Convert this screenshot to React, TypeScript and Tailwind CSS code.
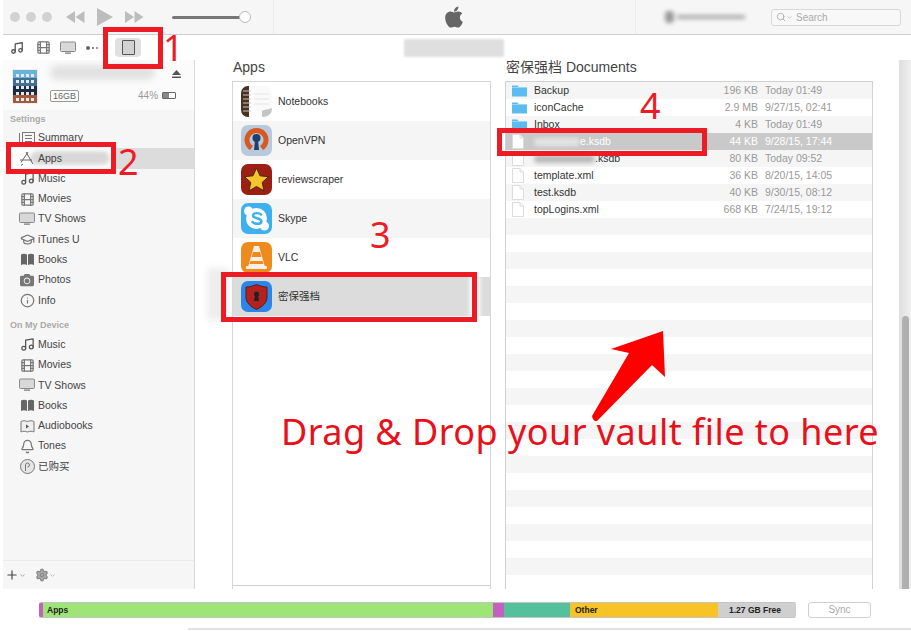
import { Music, Film, Bell, Plus, Settings, Search, ChevronDown, GraduationCap, Info } from 'lucide-react';
import { FaApple, FaCamera } from 'react-icons/fa';
import { ReactNode } from 'react';

const TvIcon = () => (
  <svg width="16" height="14" viewBox="0 0 16 14">
    <rect x="0.5" y="1" width="15" height="9.5" rx="1" fill="#d8d8d8" stroke="#8a8a8a" />
    <rect x="5" y="11.5" width="6" height="1.2" fill="#777" />
  </svg>
);

const BooksIcon = () => (
  <svg width="15" height="13" viewBox="0 0 15 13">
    <path d="M1 1.500c2-1 4-1 6 0V12c-2-1-4-1-6 0zM8 1.500c2-1 4-1 6 0V12c-2-1-4-1-6 0z" fill="#666" />
  </svg>
);

const ListIcon = () => (
  <svg width="16" height="13" viewBox="0 0 16 13" fill="none" stroke="#777">
    <rect x="3.500" y="0.500" width="12" height="12" />
    <path d="M0.500 1v11M6 3.500h7M6 6.500h7M6 9.500h7" />
  </svg>
);

const AppStoreIcon = () => (
  <svg width="16" height="15" viewBox="0 0 16 15" fill="none" stroke="#666">
    <path d="M2 11.500 9 1M7 1l7 12M1 9h12M4 13l-2 1.500" />
  </svg>
);

const AudiobookIcon = () => (
  <svg width="15" height="13" viewBox="0 0 15 13" fill="none" stroke="#777">
    <path d="M1 1.500c2-1 4-1 6.500 0 2.500-1 4.500-1 6.500 0V12c-2-1-4-1-6.500 0-2.500-1-4.500-1-6.500 0z" fill="#eee" />
    <path d="M6 4.500l3 2-3 2z" fill="#555" stroke="none" />
  </svg>
);

const PurchasedIcon = () => (
  <svg width="15" height="15" viewBox="0 0 15 15" fill="none" stroke="#777">
    <circle cx="7.500" cy="7.500" r="7" fill="#e6e6e6" />
    <path d="M5.500 12V6a2 2 0 1 1 2 2" />
  </svg>
);

const NotebooksApp = () => (
  <svg width="31" height="31" viewBox="0 0 31 31">
    <rect width="31" height="31" rx="7" fill="#fafafa" />
    <path d="M0 7a7 7 0 0 1 7-7h1v31H7a7 7 0 0 1-7-7z" fill="#4a3020" />
    <path d="M2 5h8M2 9h8M2 13h8M2 17h8M2 21h8M2 25h8" stroke="#c8c8c8" strokeWidth="1.200" />
    <path d="M13 8h15M13 13h15M13 18h15" stroke="#e4e4e4" />
    <path d="M21 31c6 0 10-3 10-9-3 2-8 1-10 3z" fill="#c4c4c4" />
  </svg>
);

const OpenVpnApp = () => (
  <svg width="31" height="31" viewBox="0 0 31 31">
    <rect width="31" height="31" rx="7" fill="#b8c9dc" />
    <path d="M9 25a12 12 0 1 1 13 0l-3-4a7 7 0 1 0-7 0z" fill="#d9581f" />
    <circle cx="15.500" cy="13" r="4" fill="#1f3f6e" />
    <path d="M14 15h3l1 10h-5z" fill="#1f3f6e" />
  </svg>
);

const ReviewApp = () => (
  <svg width="31" height="31" viewBox="0 0 31 31">
    <rect width="31" height="31" rx="7" fill="#9c1f14" />
    <path d="M15.500 4l3.500 7.800 8.500.9-6.300 5.700 1.800 8.400-7.500-4.300-7.500 4.300 1.800-8.400-6.300-5.700 8.500-.9z" fill="#f5c42c" stroke="#4a2a0a" strokeWidth="1" />
  </svg>
);

const SkypeApp = () => (
  <svg width="31" height="31" viewBox="0 0 31 31">
    <rect width="31" height="31" rx="7" fill="#3fb0ee" />
    <circle cx="15.500" cy="15.500" r="10.500" fill="#fff" />
    <circle cx="7.500" cy="8" r="4.500" fill="#fff" />
    <circle cx="23.500" cy="23" r="4.500" fill="#fff" />
    <path d="M20 11.500c-1-1.500-7.500-2.500-8 1 0 3.500 8.500 2 8.500 6-.5 3.500-7.500 2.500-9 .5" fill="none" stroke="#3fb0ee" strokeWidth="2.400" strokeLinecap="round" />
  </svg>
);

const VlcApp = () => (
  <svg width="31" height="31" viewBox="0 0 31 31">
    <rect width="31" height="31" rx="7" fill="#ef8a1f" />
    <path d="M13 4h5l6 21H7z" fill="#f6f0e6" />
    <path d="M12 10h7l1.500 5h-10zM9.500 19h12l1 3H8.500z" fill="#ef8a1f" />
    <rect x="5" y="24" width="21" height="3" rx="1" fill="#f6f0e6" />
  </svg>
);

const VaultApp = () => (
  <svg width="31" height="31" viewBox="0 0 31 31">
    <rect width="31" height="31" rx="7" fill="#2a86e8" />
    <path d="M5 6c4 0 7-1 10.500-2.500C19 5 22 6 26 6v10c0 6-5 10-10.500 12.500C10 26 5 22 5 16z" fill="#b3221f" stroke="#5e1a16" />
    <circle cx="15.500" cy="13" r="2.600" fill="#222" />
    <path d="M14 14h3l1 6h-5z" fill="#222" />
  </svg>
);

const FolderIcon = () => (
  <svg width="15" height="13" viewBox="0 0 15 13">
    <path d="M0 1.500h5.500l1 1.500H15v9.500H0z" fill="#5cbcf0" />
    <rect y="3" width="15" height="1" fill="#9bd6f6" />
  </svg>
);

const FileIcon = () => (
  <svg width="12" height="15" viewBox="0 0 12 15">
    <path d="M.5.5h7.500l3.500 3.500v10.500H.5z" fill="#fff" stroke="#dcdcdc" />
    <path d="M8 .5V4h3.500" fill="none" stroke="#dcdcdc" />
  </svg>
);

const IpadThumb = () => (
  <svg width="24" height="33" viewBox="0 0 24 33">
    <rect width="24" height="33" fill="#3f6f92" />
    <rect y="16" width="24" height="9" fill="#1d2a44" />
    <rect y="25" width="24" height="8" fill="#a25a3a" />
    <rect y="0" width="24" height="8" fill="#6bb2d8" />
    {[3, 8, 13, 18].map((x) =>
      [4, 10, 16, 22, 28].map((y) => <rect key={`${x}-${y}`} x={x} y={y} width="3" height="3" fill="#e8e8e8" />),
    )}
  </svg>
);

const settingsItems: { label: string; icon: ReactNode; selected?: boolean }[] = [
  { label: 'Summary', icon: <ListIcon /> },
  { label: 'Apps', icon: <AppStoreIcon />, selected: true },
  { label: 'Music', icon: <Music size={15} color="#555" strokeWidth={2} /> },
  { label: 'Movies', icon: <Film size={15} color="#777" /> },
  { label: 'TV Shows', icon: <TvIcon /> },
  { label: 'iTunes U', icon: <GraduationCap size={15} color="#777" /> },
  { label: 'Books', icon: <BooksIcon /> },
  { label: 'Photos', icon: <FaCamera size={14} color="#777" /> },
  { label: 'Info', icon: <Info size={15} color="#777" /> },
];

const deviceItems: { label: string; icon: ReactNode }[] = [
  { label: 'Music', icon: <Music size={15} color="#555" strokeWidth={2} /> },
  { label: 'Movies', icon: <Film size={15} color="#777" /> },
  { label: 'TV Shows', icon: <TvIcon /> },
  { label: 'Books', icon: <BooksIcon /> },
  { label: 'Audiobooks', icon: <AudiobookIcon /> },
  { label: 'Tones', icon: <Bell size={15} color="#777" /> },
  { label: '已购买', icon: <PurchasedIcon /> },
];

const apps: { name: string; icon: ReactNode }[] = [
  { name: 'Notebooks', icon: <NotebooksApp /> },
  { name: 'OpenVPN', icon: <OpenVpnApp /> },
  { name: 'reviewscraper', icon: <ReviewApp /> },
  { name: 'Skype', icon: <SkypeApp /> },
  { name: 'VLC', icon: <VlcApp /> },
  { name: '密保强档', icon: <VaultApp /> },
];

type DocFile = { name: string; size: string; date: string; folder?: boolean; selected?: boolean; smudge?: string };

const files: DocFile[] = [
  { name: 'Backup', size: '196 KB', date: 'Today 01:49', folder: true },
  { name: 'iconCache', size: '2.9 MB', date: '9/27/15, 02:41', folder: true },
  { name: 'Inbox', size: '4 KB', date: 'Today 01:49', folder: true },
  { name: 'e.ksdb', size: '44 KB', date: '9/28/15, 17:44', selected: true, smudge: 'w-[46px] bg-[#e4e4e4]' },
  { name: '.ksdb', size: '80 KB', date: 'Today 09:52', smudge: 'w-[61px] bg-[#b8b8b8]' },
  { name: 'template.xml', size: '36 KB', date: '8/20/15, 14:05' },
  { name: 'test.ksdb', size: '40 KB', date: '9/30/15, 08:12' },
  { name: 'topLogins.xml', size: '668 KB', date: '7/24/15, 19:12' },
];

const SidebarRow = ({ label, icon, selected }: { label: string; icon: ReactNode; selected?: boolean }) => (
  <div className={`relative h-[20.3px] flex items-center pl-[13px] ${selected ? 'bg-[#dcdcdc]' : ''}`}>
    {selected && <div className="absolute left-[-3px] top-0 w-[113px] h-full bg-white" />}
    {selected && <div className="absolute left-[27px] top-[3px] w-[80px] h-[14px] rounded-full bg-[#d8d8d8] blur-[2px]" />}
    <span className="relative w-[22px] flex justify-center shrink-0">{icon}</span>
    <span className="relative text-[10.500px] text-[#444]">{label}</span>
  </div>
);

const App = () => {
  return (
    <div className="relative w-[911px] h-[631px] overflow-hidden bg-white flex flex-col font-['Liberation_Sans','Noto_Sans_CJK_SC',sans-serif]">
      {/* top toolbar */}
      <div className="h-[35px] shrink-0 flex bg-[#f6f6f6] border-b border-[#cfcfcf] ml-[3px]">
        <div className="w-[271px] flex items-center border-r border-[#ececec]">
          <div className="flex gap-[6px] ml-[7px]">
            <span className="w-[10px] h-[10px] rounded-full bg-[#d2d2d2]" />
            <span className="w-[10px] h-[10px] rounded-full bg-[#d2d2d2]" />
            <span className="w-[10px] h-[10px] rounded-full bg-[#d2d2d2]" />
          </div>
          <svg className="ml-[14px]" width="19" height="12" viewBox="0 0 19 12" fill="#bdbdbd">
            <path d="M9 0v12L0 6zM18.500 0v12l-9-6z" />
          </svg>
          <svg className="ml-[12px]" width="16" height="18" viewBox="0 0 16 18" fill="#bdbdbd">
            <path d="M0 0l16 9-16 9z" />
          </svg>
          <svg className="ml-[12px]" width="19" height="12" viewBox="0 0 19 12" fill="#bdbdbd">
            <path d="M0 0v12l9-6zM9.500 0v12l9-6z" />
          </svg>
          <div className="ml-[28px] relative w-[72px] h-[3px] bg-[#777] rounded-full">
            <span className="absolute right-[-7px] top-[-5px] w-[12px] h-[12px] rounded-full bg-white border border-[#bbb]" />
          </div>
        </div>
        <div className="w-[362px] flex items-center justify-center border-r border-[#ececec]">
          <FaApple size={24} color="#666" className="ml-[-2px]" />
        </div>
        <div className="flex-1 flex items-center">
          <div className="ml-[29px] w-[80px] h-[12px] flex items-center gap-[3px] blur-[2px]">
            <span className="w-[9px] h-[12px] bg-[#999] rounded-sm" />
            <span className="flex-1 h-[4px] bg-[#aaa]" />
          </div>
          <div className="ml-[26px] w-[130px] h-[17px] border border-[#d8d8d8] rounded-[3px] bg-[#f8f8f8] flex items-center pl-[4px]">
            <Search size={10} color="#aaa" />
            <ChevronDown size={7} color="#aaa" />
            <span className="ml-[3px] text-[10px] text-[#aaa]">Search</span>
          </div>
        </div>
      </div>

      {/* media tabs */}
      <div className="h-[25px] shrink-0 flex items-center pl-[10px] relative">
        <Music size={14} color="#555" strokeWidth={2.200} />
        <Film size={15} color="#777" className="ml-[12px]" />
        <span className="ml-[9px]"><TvIcon /></span>
        <span className="ml-[10px] flex items-center gap-[2px]">
          <span className="w-[4px] h-[4px] rounded-full bg-[#666]" />
          <span className="w-[2px] h-[2px] rounded-full bg-[#666]" />
          <span className="w-[2px] h-[2px] rounded-full bg-[#e0556a]" />
        </span>
        <div className="ml-[17px] w-[26px] h-[19px] rounded-[4px] bg-[#e0e0e0] flex items-center justify-center">
          <span className="w-[13px] h-[15px] bg-[#d2d2d2] border border-[#555] rounded-[1px]" />
        </div>
        <div className="ml-[263px] w-[100px] h-[18px] bg-[#dfdfdf] rounded-[2px] blur-[1px]" />
      </div>

      {/* body */}
      <div className="h-[529px] shrink-0 flex overflow-hidden">
        {/* sidebar */}
        <div className="w-[192px] ml-[3px] shrink-0 bg-[#f6f6f6] border-r border-[#d8d8d8] flex flex-col">
          <div className="h-[50px] shrink-0 bg-[#fbfbfb] relative pl-[9px] pt-[9px] flex">
            <div className="w-[26px] h-[35px] border border-[#eee] shrink-0">
              <IpadThumb />
            </div>
            <div className="ml-[12px] flex-1 flex flex-col">
              <div className="h-[15px] w-[105px] rounded-full bg-[#e2e2e2] blur-[3px] mt-[-4px]" />
              <div className="mt-[8px] flex items-center">
                <span className="border border-[#999] rounded-[2px] px-[2px] text-[9px] leading-[10px] text-[#666]">16GB</span>
                <span className="ml-[59px] text-[10px] text-[#999]">44%</span>
                <span className="ml-[4px] w-[14px] h-[7px] border border-[#666] rounded-[1px]">
                  <span className="block w-[6px] h-full bg-[#888]" />
                </span>
              </div>
            </div>
            <svg className="absolute right-[13px] top-[10px]" width="9" height="8" viewBox="0 0 9 8" fill="#555">
              <path d="M4.500 0 9 5H0zM0 6.500h9V8H0z" />
            </svg>
          </div>
          <div className="h-[16px] pl-[7px] flex items-end text-[9px] font-bold text-[#aaa]">Settings</div>
          <div className="mt-[2px]">
            {settingsItems.map((item) => (
              <SidebarRow key={item.label} {...item} />
            ))}
          </div>
          <div className="h-[17px] mt-[5px] pl-[7px] flex items-end text-[9px] font-bold text-[#aaa]">On My Device</div>
          <div className="mt-[2px]">
            {deviceItems.map((item) => (
              <SidebarRow key={item.label} {...item} />
            ))}
          </div>
          <div className="mt-auto h-[29px] border-t border-[#ebebeb] flex items-center pl-[2px]">
            <Plus size={14} color="#444" />
            <ChevronDown size={7} color="#777" />
            <Settings size={14} color="#888" fill="#aaa" className="ml-[9px]" />
            <ChevronDown size={7} color="#999" />
          </div>
        </div>

        {/* apps column */}
        <div className="w-[259px] ml-[37px] shrink-0 flex flex-col">
          <div className="h-[21px] shrink-0 pl-[1px] text-[14px] leading-[14px] text-[#444]">Apps</div>
          <div className="flex-1 border-x border-t border-[#d6d6d6] flex flex-col">
            {apps.map((app, i) => (
              <div
                key={app.name}
                className={`h-[39px] flex items-center pl-[8px] ${i === 5 ? 'bg-[#dcdcdc]' : i % 2 === 1 ? 'bg-[#f5f5f5]' : 'bg-white'}`}
              >
                {app.icon}
                <span className="ml-[6px] text-[10.500px] text-[#333]">{app.name}</span>
              </div>
            ))}
            <div className="mt-auto h-[4px] border-t border-[#cfcfcf]" />
          </div>
        </div>

        {/* documents column */}
        <div className="w-[368px] ml-[14px] shrink-0 flex flex-col">
          <div className="h-[21px] shrink-0 pl-[1px] text-[14px] leading-[14px] text-[#444]">密保强档 Documents</div>
          <div className="flex-1 border-x border-t border-[#d0d0d0] overflow-hidden">
            {Array.from({ length: 30 }).map((_, i) => {
              const file = files[i];
              const selected = file?.selected;
              return (
                <div
                  key={i}
                  className={`h-[17px] flex items-center text-[10.500px] ${selected ? 'bg-[#c9c9c9] text-white' : i % 2 === 0 ? 'bg-[#f5f5f5] text-[#333]' : 'bg-white text-[#333]'}`}
                >
                  {file && (
                    <>
                      <span className="w-[28px] pl-[6px] flex shrink-0">{file.folder ? <FolderIcon /> : <FileIcon />}</span>
                      <span className="w-[146px] shrink-0 flex items-center">
                        {file.smudge && <span className={`h-[8px] rounded-full blur-[2px] ${file.smudge}`} />}
                        {file.name}
                      </span>
                      <span className={`w-[78px] text-right shrink-0 ${selected ? '' : 'text-[#999]'}`}>{file.size}</span>
                      <span className={`ml-[7px] ${selected ? '' : 'text-[#999]'}`}>{file.date}</span>
                    </>
                  )}
                </div>
              );
            })}
          </div>
        </div>

        {/* scrollbar */}
        <div className="ml-auto w-[12px] shrink-0 bg-gradient-to-r from-[#dedede] to-[#f0f0f0] flex flex-col">
          <div className="mt-[256px] flex-1 w-[7px] ml-[3px] bg-[#b0b0b0] rounded-t-full" />
        </div>
      </div>

      {/* storage bar */}
      <div className="flex-1 flex items-start pt-[13px] pl-[39px]">
        <div className="w-[757px] h-[16px] flex rounded-[2px] overflow-hidden border-y border-[#c4c4c4] text-[8.500px] font-bold leading-[14px] text-[#222]">
          <div className="w-[4px] bg-[#c560c0]" />
          <div className="w-[450px] bg-[#9fe477] pl-[4px]">Apps</div>
          <div className="w-[11px] bg-[#c560c0]" />
          <div className="w-[66px] bg-[#55c09c]" />
          <div className="w-[148px] bg-[#f7c327] pl-[5px]">Other</div>
          <div className="flex-1 bg-[#cfcfcf] pl-[11px]">1.27 GB Free</div>
        </div>
        <div className="ml-[12px] w-[63px] h-[16px] border border-[#cfcfcf] rounded-[3px] bg-white text-center text-[10px] leading-[14px] text-[#aaa]">Sync</div>
      </div>
      <div className="absolute left-[188px] right-0 bottom-[1px] h-[2px] bg-[#e2e2e2]" />

      {/* tutorial overlays */}
      <div className="absolute left-[207px] top-[268px] w-[22px] h-[52px] bg-[#eeeeee] blur-[3px]" />
      <div className="absolute left-[470px] top-[276px] w-[10px] h-[42px] bg-white blur-[2px]" />
      <div className="absolute left-[103px] top-[27px] w-[60px] h-[42px] border-[5px] border-[#ed1c24]" />
      <div className="absolute left-[6px] top-[142px] w-[110px] h-[32px] border-[5px] border-[#ed1c24]" />
      <div className="absolute left-[221px] top-[272px] w-[256px] h-[50px] border-[5px] border-[#ed1c24]" />
      <div className="absolute left-[497px] top-[128px] w-[210px] h-[28px] border-[5px] border-[#ed1c24]" />
      <span className="absolute left-[163px] top-[24px] text-[36px] leading-[48px] font-['Noto_Sans'] text-[#ed1c24]">1</span>
      <span className="absolute left-[118px] top-[138px] text-[36px] leading-[48px] font-['Noto_Sans'] text-[#ed1c24]">2</span>
      <span className="absolute left-[370px] top-[211px] text-[36px] leading-[48px] font-['Noto_Sans'] text-[#ed1c24]">3</span>
      <span className="absolute left-[640px] top-[82px] text-[36px] leading-[48px] font-['Noto_Sans'] text-[#ed1c24]">4</span>
      <svg className="absolute left-[590px] top-[330px]" width="80" height="95" viewBox="590 330 80 95">
        <path d="M663 331 611 349 629 353 592 416Q593 422 597 421L652 365 665 377z" fill="#ff0000" />
      </svg>
      <span className="absolute left-[281px] top-[407px] whitespace-nowrap text-[36px] leading-[50px] font-['Noto_Sans'] tracking-[0.450px] text-[#e8101a]">
        Drag &amp; Drop your vault file to here
      </span>
    </div>
  );
};

export default App;
